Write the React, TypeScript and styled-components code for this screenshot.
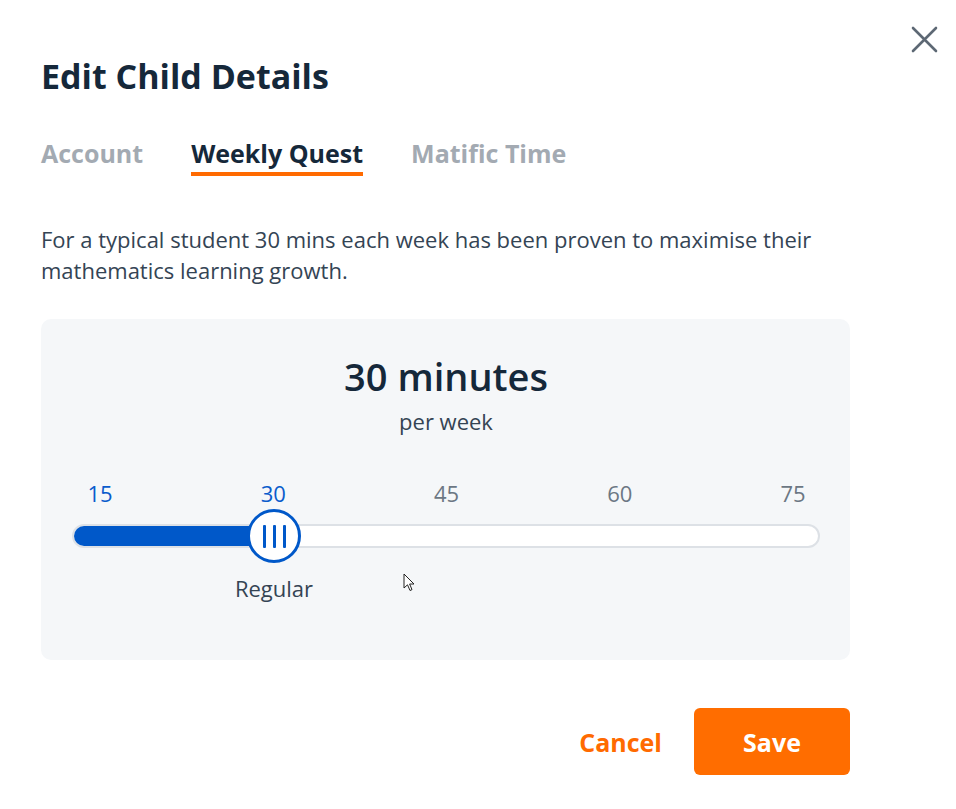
import React, { useState } from "react";
import styled, { createGlobalStyle } from "styled-components";

const GlobalStyle = createGlobalStyle`
  html, body {
    margin: 0;
    padding: 0;
    background: #ffffff;
    font-family: "Open Sans", "Noto Sans", sans-serif;
  }
`;

const Modal = styled.div`
  position: relative;
  width: 956px;
  height: 809px;
  box-sizing: border-box;
  padding: 52px 106px 0 41px;
`;

const CloseButton = styled.button`
  position: absolute;
  top: 24px;
  right: 17px;
  width: 30px;
  height: 30px;
  padding: 0;
  border: none;
  background: none;
  cursor: pointer;
  color: #5d6874;
`;

const Title = styled.h1`
  margin: 0;
  font-size: 34px;
  line-height: 48px;
  font-weight: 700;
  color: #15283a;
`;

const Tabs = styled.div`
  display: flex;
  gap: 48px;
  margin-top: 36px;
`;

const Tab = styled.button<{ $active?: boolean }>`
  padding: 0 0 2px;
  border: none;
  background: none;
  font-family: inherit;
  font-size: 25px;
  line-height: 34px;
  font-weight: 700;
  color: ${(p) => (p.$active ? "#15283a" : "#a3aab2")};
  border-bottom: 4px solid ${(p) => (p.$active ? "#ff6a00" : "transparent")};
  cursor: pointer;
`;

const Intro = styled.p`
  margin: 48px 0 0;
  font-size: 22px;
  line-height: 31px;
  color: #344454;
`;

const Panel = styled.div`
  margin-top: 33px;
  height: 341px;
  box-sizing: border-box;
  background: #f5f7f9;
  border-radius: 10px;
  padding: 31px 30px 0 31px;
  display: flex;
  flex-direction: column;
  align-items: center;
`;

const Amount = styled.div`
  font-size: 38px;
  line-height: 52px;
  font-weight: 600;
  color: #15283a;
`;

const Unit = styled.div`
  margin-top: 4px;
  font-size: 22px;
  line-height: 30px;
  color: #344454;
`;

const SliderArea = styled.div`
  align-self: stretch;
  margin-top: 42px;
`;

const Ticks = styled.div`
  display: flex;
  justify-content: space-between;
  padding: 0 11px 0 12px;
`;

const Tick = styled.span<{ $on?: boolean }>`
  width: 32px;
  text-align: center;
  font-size: 22px;
  line-height: 30px;
  color: ${(p) => (p.$on ? "#0a5ccc" : "#6c7784")};
`;

const TrackWrap = styled.div`
  position: relative;
  margin-top: 1px;
  height: 54px;
  display: flex;
  align-items: center;
`;

const Track = styled.div`
  position: relative;
  flex: 1;
  height: 24px;
  box-sizing: border-box;
  border: 2px solid #dde1e6;
  border-radius: 12px;
  background: #ffffff;
  overflow: hidden;
`;

const Fill = styled.div`
  position: absolute;
  left: -2px;
  top: -2px;
  bottom: -2px;
  background: #0058c9;
  border-radius: 12px 0 0 12px;
`;

const Thumb = styled.div`
  position: absolute;
  top: 0;
  width: 54px;
  height: 54px;
  box-sizing: border-box;
  margin-left: -27px;
  border-radius: 50%;
  background: #ffffff;
  border: 3px solid #0058c9;
  display: flex;
  align-items: center;
  justify-content: center;
  gap: 7px;
`;

const Grip = styled.span`
  width: 3px;
  height: 23px;
  background: #0058c9;
  border-radius: 1px;
`;

const ThumbLabel = styled.div`
  position: relative;
  height: 40px;
`;

const LabelText = styled.span`
  position: absolute;
  top: 10px;
  transform: translateX(-50%);
  font-size: 22px;
  line-height: 30px;
  color: #344454;
  white-space: nowrap;
`;

const Actions = styled.div`
  display: flex;
  justify-content: flex-end;
  align-items: center;
  gap: 32px;
  margin-top: 48px;
`;

const TextButton = styled.button`
  border: none;
  background: none;
  padding: 0;
  font-family: inherit;
  font-size: 25px;
  font-weight: 700;
  color: #ff6a00;
  cursor: pointer;
`;

const PrimaryButton = styled.button`
  width: 156px;
  height: 67px;
  border: none;
  border-radius: 6px;
  background: #ff6d00;
  color: #ffffff;
  font-family: inherit;
  font-size: 25px;
  font-weight: 700;
  cursor: pointer;
`;

const Cursor = styled.svg`
  position: absolute;
  left: 403px;
  top: 573px;
`;

const values = [15, 30, 45, 60, 75];
const labels: Record<number, string> = { 30: "Regular" };

export default function App() {
  const [tab, setTab] = useState("Weekly Quest");
  const value = 30;
  const idx = values.indexOf(value);
  // thumb travels between the track ends inset by its radius
  const pos = `calc(26px + (100% - 52px) * ${idx / (values.length - 1)} + 2px)`;

  return (
    <>
      <GlobalStyle />
      <Modal>
        <CloseButton aria-label="Close">
          <svg width="30" height="30" viewBox="0 0 30 30">
            <path
              d="M4 4 L27 27 M27 4 L4 27"
              stroke="currentColor"
              strokeWidth="2.6"
              strokeLinecap="round"
            />
          </svg>
        </CloseButton>
        <Title>Edit Child Details</Title>
        <Tabs>
          {["Account", "Weekly Quest", "Matific Time"].map((t) => (
            <Tab key={t} $active={t === tab} onClick={() => setTab(t)}>
              {t}
            </Tab>
          ))}
        </Tabs>
        <Intro>
          For a typical student 30 mins each week has been proven to maximise their
          mathematics learning growth.
        </Intro>
        <Panel>
          <Amount>{value} minutes</Amount>
          <Unit>per week</Unit>
          <SliderArea>
            <Ticks>
              {values.map((v) => (
                <Tick key={v} $on={v <= value}>
                  {v}
                </Tick>
              ))}
            </Ticks>
            <TrackWrap>
              <Track>
                <Fill style={{ width: pos }} />
              </Track>
              <Thumb style={{ left: pos }}>
                <Grip />
                <Grip />
                <Grip />
              </Thumb>
            </TrackWrap>
            <ThumbLabel>
              <LabelText style={{ left: pos }}>{labels[value]}</LabelText>
            </ThumbLabel>
          </SliderArea>
        </Panel>
        <Actions>
          <TextButton>Cancel</TextButton>
          <PrimaryButton>Save</PrimaryButton>
        </Actions>
        <Cursor width="14" height="20" viewBox="0 0 14 20">
          <path
            d="M1 1 L1 15 L4.5 11.8 L7 17.5 L9 16.6 L6.6 11 L11 11 Z"
            fill="#ffffff"
            stroke="#222"
            strokeWidth="1"
            strokeLinejoin="round"
          />
        </Cursor>
      </Modal>
    </>
  );
}
